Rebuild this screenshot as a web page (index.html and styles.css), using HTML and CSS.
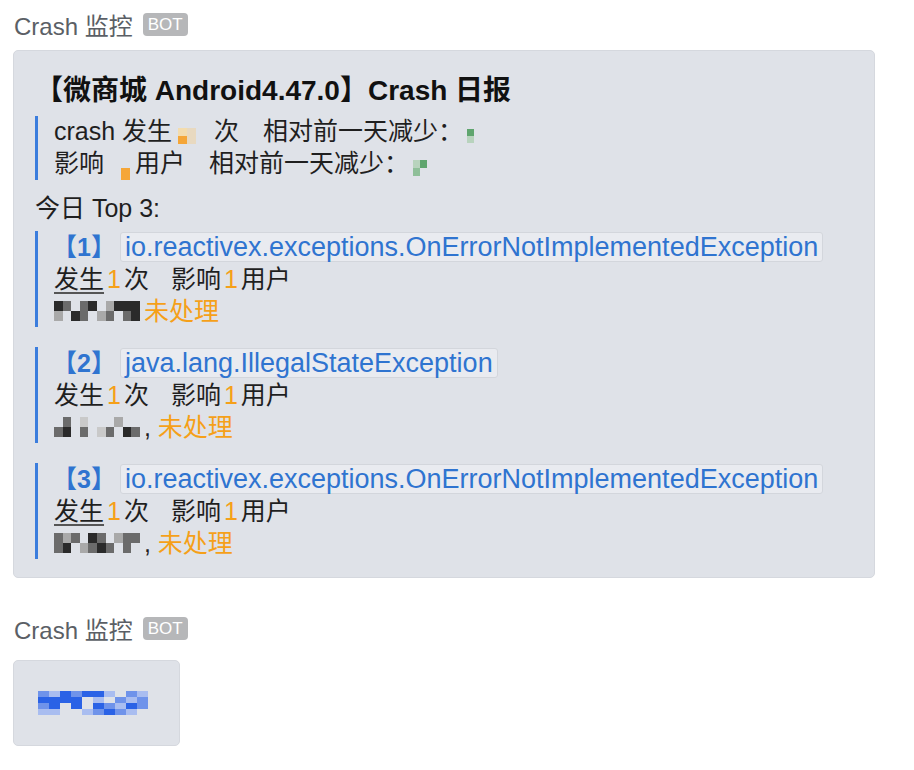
FILE: index.html
```html
<!DOCTYPE html>
<html lang="zh-CN">
<head>
<meta charset="utf-8">
<title>Crash 监控</title>
<link rel="stylesheet" href="styles.css">
</head>
<body>
<div class="feed">
  <section class="msg">
    <div class="sender"><span class="name">Crash 监控</span><span class="bot">BOT</span></div>
    <div class="card">
      <h1 class="title">【微商城 Android4.47.0】Crash 日报</h1>
      <div class="quote q-summary">
        <div class="line">crash 发生<span class="mosaic m-num"><i class="c o1"></i><i class="c o2"></i><i class="c o3"></i><i class="c o2"></i></span>次<span class="gap"></span>相对前一天减少：<span class="mosaic m-g"><i class="c g1"></i><i class="c g2"></i></span></div>
        <div class="line">影响<span class="mosaic m-num2"><i class="c o0"></i><i class="c o3"></i></span>用户<span class="gap"></span>相对前一天减少：<span class="mosaic m-g2"><i class="c g2"></i><i class="c g1"></i><i class="c g3"></i><i class="c g0"></i></span></div>
      </div>
      <div class="top">今日 Top 3:</div>
      <div class="quote item">
        <div class="line"><span class="idx">【1】</span><code class="exc">io.reactivex.exceptions.OnErrorNotImplementedException</code></div>
        <div class="line"><span class="ul">发生</span><span class="num">1</span>次<span class="gap"></span>影响<span class="num">1</span>用户</div>
        <div class="line"><span class="mosaic m-user"><i class="c k1"></i><i class="c k2"></i><i class="c k0"></i><i class="c k2"></i><i class="c k1"></i><i class="c k0"></i><i class="c k3"></i><i class="c k1"></i><i class="c k1"></i><i class="c k1"></i><i class="c k3"></i><i class="c k0"></i><i class="c k1"></i><i class="c k2"></i><i class="c k0"></i><i class="c k3"></i><i class="c k2"></i><i class="c k0"></i><i class="c k2"></i><i class="c k1"></i></span><span class="status">未处理</span></div>
      </div>
      <div class="quote item">
        <div class="line"><span class="idx">【2】</span><code class="exc">java.lang.IllegalStateException</code></div>
        <div class="line">发生<span class="num">1</span>次<span class="gap"></span>影响<span class="num">1</span>用户</div>
        <div class="line"><span class="mosaic m-user"><i class="c k0"></i><i class="c k2"></i><i class="c k0"></i><i class="c k4"></i><i class="c k0"></i><i class="c k0"></i><i class="c k0"></i><i class="c k3"></i><i class="c k0"></i><i class="c k0"></i><i class="c k2"></i><i class="c k1"></i><i class="c k0"></i><i class="c k2"></i><i class="c k0"></i><i class="c k4"></i><i class="c k2"></i><i class="c k0"></i><i class="c k1"></i><i class="c k2"></i></span>,&nbsp;<span class="status">未处理</span></div>
      </div>
      <div class="quote item">
        <div class="line"><span class="idx">【3】</span><code class="exc">io.reactivex.exceptions.OnErrorNotImplementedException</code></div>
        <div class="line"><span class="ul">发生</span><span class="num">1</span>次<span class="gap"></span>影响<span class="num">1</span>用户</div>
        <div class="line"><span class="mosaic m-user"><i class="c k2"></i><i class="c k3"></i><i class="c k2"></i><i class="c k0"></i><i class="c k1"></i><i class="c k2"></i><i class="c k0"></i><i class="c k3"></i><i class="c k2"></i><i class="c k2"></i><i class="c k2"></i><i class="c k1"></i><i class="c k0"></i><i class="c k3"></i><i class="c k2"></i><i class="c k1"></i><i class="c k2"></i><i class="c k0"></i><i class="c k2"></i><i class="c k0"></i></span>,&nbsp;<span class="status">未处理</span></div>
      </div>
    </div>
  </section>
  <section class="msg second">
    <div class="sender"><span class="name">Crash 监控</span><span class="bot">BOT</span></div>
    <div class="card small">
      <span class="mosaic m-link"><i class="c b2"></i><i class="c b3"></i><i class="c b1"></i><i class="c b2"></i><i class="c b1"></i><i class="c b1"></i><i class="c b3"></i><i class="c b0"></i><i class="c b2"></i><i class="c b3"></i><i class="c b1"></i><i class="c b1"></i><i class="c b1"></i><i class="c b1"></i><i class="c b0"></i><i class="c b3"></i><i class="c b0"></i><i class="c b2"></i><i class="c b3"></i><i class="c b2"></i><i class="c b2"></i><i class="c b1"></i><i class="c b0"></i><i class="c b1"></i><i class="c b0"></i><i class="c b1"></i><i class="c b2"></i><i class="c b3"></i><i class="c b1"></i><i class="c b2"></i><i class="c b3"></i><i class="c b3"></i><i class="c b0"></i><i class="c b0"></i><i class="c b3"></i><i class="c b2"></i><i class="c b1"></i><i class="c b2"></i><i class="c b3"></i><i class="c b0"></i></span>
    </div>
  </section>
</div>
</body>
</html>
```
FILE: styles.css
```css
* { box-sizing: border-box; }
html, body { margin: 0; padding: 0; background: #ffffff; }
body {
  font-family: "Liberation Sans", "Noto Sans CJK SC", sans-serif;
  color: #1f1f1f;
}
.feed { padding: 10px 13px 0 13px; }
.msg { display: flex; flex-direction: column; align-items: flex-start; }
.second { margin-top: 37px; }
.sender { display: flex; align-items: center; gap: 10px; height: 28px; padding-left: 1px; }
.name { font-size: 24px; color: #5b5f66; }
.bot {
  font-size: 17px; color: #ffffff; background: #b6b7b9; border-radius: 4px;
  padding: 2px 5px; line-height: 19px;
}
.card {
  margin-top: 12px;
  width: 862px;
  background: #dfe2e8;
  border: 1px solid #d5d8de;
  border-radius: 5px;
  padding: 21px 21px 18px 21px;
  font-size: 25px;
}
.title { margin: 0; font-size: 28px; font-weight: 700; line-height: 38px; color: #111; }
.quote { border-left: 3px solid #3b7ddd; padding-left: 16px; }
.line { line-height: 32px; white-space: nowrap; display: flex; align-items: center; }
.q-summary { margin-top: 6px; }
.q-summary .line { line-height: 31.5px; }
.gap { display: inline-block; width: 24px; }
.item .gap { width: 22px; }
.top { line-height: 32px; margin-top: 12px; }
.item { margin-top: 7px; }
.item + .item { margin-top: 20px; }
.idx { color: #2f74d0; font-weight: 700; margin-left: -2px; }
.exc {
  font-family: "Liberation Sans", sans-serif;
  font-size: 27px;
  color: #2f74d0;
  background: #e9ebf0;
  border: 1px solid #d3d6dc;
  border-radius: 3px;
  padding: 0 4px;
  line-height: 28px;
  margin-left: 4px;
}
.num { color: #f5a019; margin: 0 3px; }
.status { color: #f5a019; }
.ul { text-decoration: underline; text-decoration-color: #555; text-underline-offset: 4px; }
.mosaic { display: inline-grid; }
.c { display: block; }
.m-num { grid-template-columns: 9px 9px; grid-auto-rows: 8px; margin: 8px 18px 0 6px; }
.m-num2 { grid-template-columns: 9px; grid-auto-rows: 12px; margin: 8px 5px 0 17px; }
.m-g { grid-template-columns: 7px; grid-auto-rows: 7px; margin: 8px 0 0 4px; }
.m-g2 { grid-template-columns: 7px 7px; grid-auto-rows: 8px; margin: 8px 0 0 4px; }
.m-user { grid-template-columns: repeat(10, 8.6px); grid-auto-rows: 10px; margin-right: 4px; }
.m-link { grid-template-columns: repeat(10, 11px); grid-auto-rows: 6px; }
.o0 { background: transparent; }
.o1 { background: #f3dcae; }
.o2 { background: #e8d9c0; }
.o3 { background: #f5a638; }
.g0 { background: transparent; }
.g1 { background: #5fa56e; }
.g2 { background: #b8d3bd; }
.g3 { background: #8fbf99; }
.k0 { background: transparent; }
.k1 { background: #2a2a2a; }
.k2 { background: #6b6b6b; }
.k3 { background: #a9a9a9; }
.k4 { background: #c9c9c9; }
.b0 { background: transparent; }
.b1 { background: #2a62e6; }
.b2 { background: #6f93ea; }
.b3 { background: #a9bdf0; }
.small {
  width: 167px; height: 86px; padding: 0 0 0 24px;
  display: flex; align-items: center; margin-top: 17px;
}
```
